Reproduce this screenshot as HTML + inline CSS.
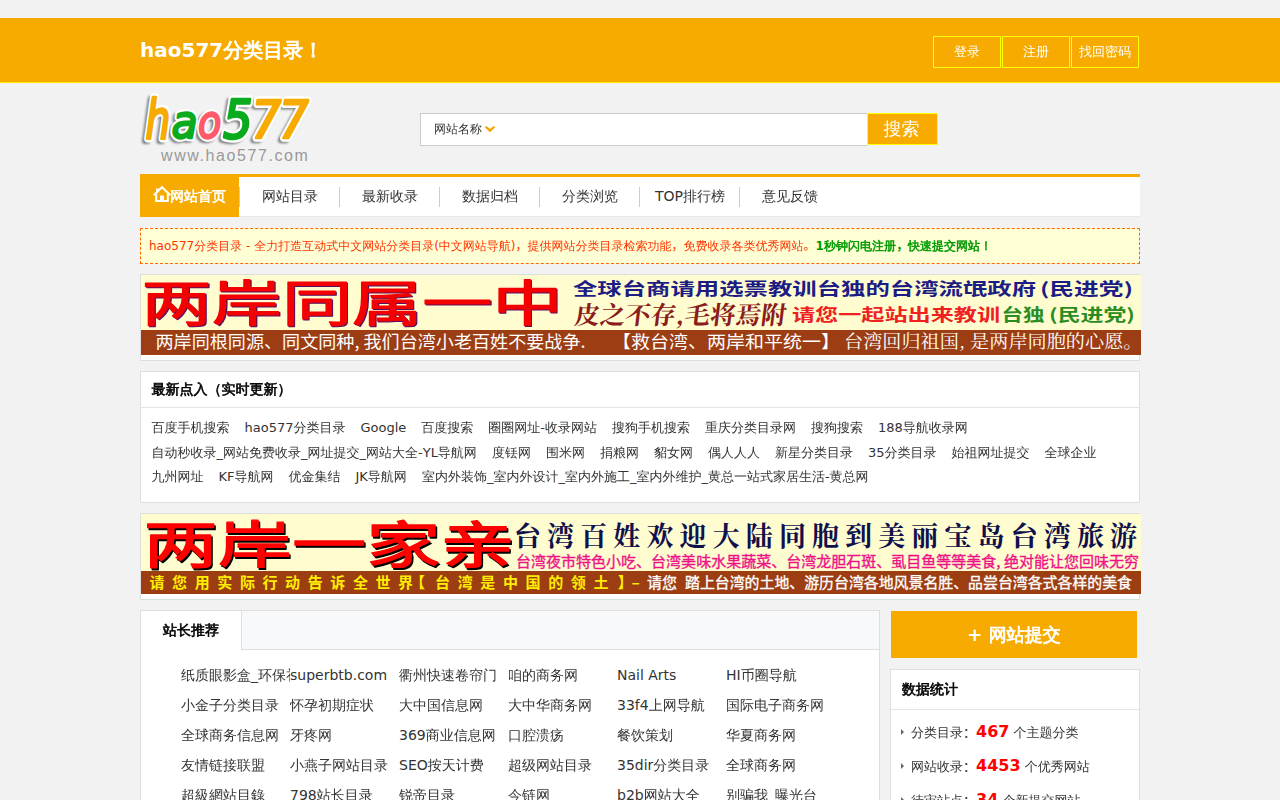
<!DOCTYPE html>
<html lang="zh-CN">
<head>
<meta charset="utf-8">
<title>hao577分类目录</title>
<style>
*{margin:0;padding:0;box-sizing:border-box}
html,body{width:1280px;height:800px;overflow:hidden}
body{background:#f2f2f2;font-family:"DejaVu Sans","WenQuanYi Zen Hei","Noto Sans CJK SC",sans-serif;font-size:12px;color:#333;position:relative}
a{color:#333;text-decoration:none}
.p{font-family:"Noto Sans CJK SC","WenQuanYi Zen Hei",sans-serif;line-height:0}
.fb{font-weight:normal;-webkit-text-stroke:0.0417em currentColor}
#top{position:absolute;left:0;top:18px;width:1280px;height:65px;background:#f7ab00;border-bottom:1px solid #ffea00}
#top h1{position:absolute;left:140px;top:18px;font-size:20px;line-height:28px;color:#fff;font-weight:bold;white-space:nowrap}
#top .btns{position:absolute;left:933px;top:18px;width:220px}
#top .btns a{float:left;width:68px;height:32px;border:1px solid #ffff00;color:#fff;font-size:13px;line-height:30px;text-align:center;margin-right:1px}
#logo{position:absolute;left:130px;top:85px;width:200px;height:85px}
#search{position:absolute;left:420px;top:113px;width:447px;height:33px;background:#fff;border:1px solid #ccc;border-right:0}
#search span{position:absolute;left:13px;top:0;line-height:31px;font-size:12px;color:#333}
#search svg{position:absolute;left:64px;top:12px}
#sbtn{position:absolute;left:867px;top:113px;width:71px;height:32px;background:#f7ab00;border:1px solid #ffff00;color:#fff;font-size:18px;line-height:30px;text-align:center;padding-right:2px}
#nav{position:absolute;left:140px;top:174px;width:1000px;height:43px;background:#fff;border-top:3px solid #f7ab00;border-bottom:1px solid #e8e8e8}
#nav a{float:left;width:100px;height:40px;line-height:39px;text-align:center;font-size:14px;color:#333;position:relative}
#nav a.cur{color:#fff;font-weight:bold}
#nav a.cur em{position:absolute;left:0;top:0;width:99px;height:40px;background:#f7ab00;font-style:normal;text-align:left;padding-left:30px}
#nav a.cur svg{position:absolute;left:13px;top:8px}
#nav a i{position:absolute;right:0;top:10px;height:20px;width:1px;background:#ccc}
#notice{position:absolute;left:140px;top:228px;width:1000px;height:36px;background:#ffffd5;border:1px dashed #ff6600;line-height:34px;padding-left:8px;color:#ff3300;font-size:12px;white-space:nowrap}
#notice b{color:#009900}
.ban{position:absolute;left:140px;width:1000px;height:87px;border:1px solid #dedede;background:#fff}
#ban1{top:274px}
#ban2{top:513px}
.box{position:absolute;background:#fff;border:1px solid #dedede}
#latest{left:140px;top:371px;width:1000px;height:132px}
#latest h3{height:36px;line-height:35px;padding-left:10.5px;font-size:14px;border-bottom:1px solid #e5e5e5;color:#000}
#latest p{padding:0 0 0 10.5px;line-height:24.5px;font-size:13px;white-space:nowrap}
#latest p.f{padding-top:8px}
#latest p a{margin-right:15px;display:inline-block}
#rec{left:140px;top:610px;width:740px;height:260px}
#rec .tabs{height:39px;background:#f8f9fb;border-bottom:1px solid #dedede}
#rec .tabs span{display:block;width:101px;height:39px;background:#fff;border-right:1px solid #dedede;font-size:14px;line-height:38px;padding-left:22px;color:#000}
#rec ul{list-style:none;padding:10px 0 0 40px}
#rec li{height:30px;white-space:nowrap}
#rec li a{display:inline-block;width:109px;height:30px;line-height:30px;font-size:14px;overflow:hidden;vertical-align:top;white-space:nowrap}
#submit{position:absolute;left:891px;top:611px;width:246px;height:47px;background:#f7ab00;color:#fff;font-size:18px;font-weight:bold;line-height:47px;text-align:center}
#stat{left:890px;top:669px;width:250px;height:200px}
#stat h3{height:40px;line-height:39px;padding-left:11px;font-size:14px;border-bottom:1px solid #e5e5e5;color:#000}
#stat ul{list-style:none;padding:5px 0 0 9px}
#stat li{height:34px;line-height:34px;font-size:13px;color:#333;white-space:nowrap;position:relative;padding-left:11px}
#stat li i{position:absolute;left:1px;top:14px;width:0;height:0;border:3px solid transparent;border-left:3px solid #666;border-right:0}
#stat li b{color:#f00;font-size:16px}
</style>
</head>
<body>
<div id="top">
  <h1>hao577<span class="fb">分类目录！</span></h1>
  <div class="btns"><a>登录</a><a>注册</a><a>找回密码</a></div>
</div>
<div id="logo"><svg width="200" height="85" viewBox="0 0 200 85">
<defs><filter id="ls" x="-10%" y="-10%" width="120%" height="130%"><feGaussianBlur stdDeviation="1.3"/></filter></defs>
<g font-family="'DejaVu Sans',sans-serif" font-style="oblique" font-size="57" stroke-linejoin="round" stroke-linecap="round">
<g fill="#666" stroke="#666" opacity="0.8" filter="url(#ls)" transform="translate(-2.5,2.5)" stroke-width="7"><text transform="translate(15.5,52.5) scale(0.69,0.935)">h</text><text transform="translate(41.5,52.5) scale(0.75,0.82)">a</text><text transform="translate(68,52.5) scale(0.67,0.82)">o</text><text transform="translate(93,52.5) scale(0.82,0.95)">5</text><text transform="translate(121.5,52.5) scale(0.82,0.915)">7</text><text transform="translate(149,52.5) scale(0.82,0.915)">7</text></g>
<g fill="#fff" stroke="#fff" stroke-width="8"><text transform="translate(15.5,52.5) scale(0.69,0.935)">h</text><text transform="translate(41.5,52.5) scale(0.75,0.82)">a</text><text transform="translate(68,52.5) scale(0.67,0.82)">o</text><text transform="translate(93,52.5) scale(0.82,0.95)">5</text><text transform="translate(121.5,52.5) scale(0.82,0.915)">7</text><text transform="translate(149,52.5) scale(0.82,0.915)">7</text></g>
<g  stroke-width="2.8"><text transform="translate(15.5,52.5) scale(0.69,0.935)" fill="#f7ab00" stroke="#f7ab00">h</text><text transform="translate(41.5,52.5) scale(0.75,0.82)" fill="#0aab1e" stroke="#0aab1e">a</text><text transform="translate(68,52.5) scale(0.67,0.82)" fill="#ff5a6a" stroke="#ff5a6a">o</text><text transform="translate(93,52.5) scale(0.82,0.95)" fill="#0aab1e" stroke="#0aab1e">5</text><text transform="translate(121.5,52.5) scale(0.82,0.915)" fill="#f7ab00" stroke="#f7ab00">7</text><text transform="translate(149,52.5) scale(0.82,0.915)" fill="#f7ab00" stroke="#f7ab00">7</text></g>
</g>
<text x="31" y="75.5" font-family="'Liberation Sans',sans-serif" font-size="16" letter-spacing="1.58" fill="#999">www.hao577.com</text>
</svg></div>
<div id="search"><span>网站名称</span><svg width="10" height="7" viewBox="0 0 10 7"><path d="M0 0.5 H2 L5 3 L8 0.5 H10 V1.5 L5 6.2 L0 1.5 Z" fill="#f7a400"/></svg></div>
<div id="sbtn">搜索</div>
<div id="nav">
  <a class="cur"><em><svg width="18" height="18" viewBox="0 0 18 18"><path d="M0.6 10.2 L9 2.2 L17.4 10.2 M3.2 9 V16 H14.8 V9" fill="none" stroke="#fff" stroke-width="2"/><rect x="3" y="3.4" width="2.6" height="4.2" fill="#fff"/><rect x="7" y="10.6" width="4" height="5.4" fill="#fff"/></svg><span class="fb">网站首页</span></em><i></i></a><a>网站目录<i></i></a><a>最新收录<i></i></a><a>数据归档<i></i></a><a>分类浏览<i></i></a><a>TOP排行榜<i></i></a><a>意见反馈</a>
</div>
<div id="notice">hao577分类目录 - 全力打造互动式中文网站分类目录(中文网站导航)<span class="p">，</span>提供网站分类目录检索功能<span class="p">，</span>免费收录各类优秀网站<span class="p">。</span><b>1<span class="fb">秒钟闪电注册</span><span class="p">，</span><span class="fb">快速提交网站！</span></b></div>
<div class="ban" id="ban1"><svg width="1000" height="80" viewBox="0 0 1000 80" style="display:block;overflow:visible">
<rect width="1000" height="55" fill="#fffdd0"/><rect y="55" width="1000" height="25" fill="#9c3d14"/>
<text x="0.6" y="45.7" font-family="'Noto Sans CJK SC','WenQuanYi Zen Hei',sans-serif" font-size="49" font-weight="normal" fill="#5a1060" textLength="421" lengthAdjust="spacingAndGlyphs" transform="translate(1.2,1.2)" stroke="#5a1060" stroke-width="1.2" stroke-linejoin="round">两岸同属一中</text>
<text x="0.6" y="45.7" font-family="'Noto Sans CJK SC','WenQuanYi Zen Hei',sans-serif" font-size="49" font-weight="normal" fill="#f40000" textLength="421" lengthAdjust="spacingAndGlyphs" stroke="#f40000" stroke-width="1.2" stroke-linejoin="round">两岸同属一中</text>
<text x="432" y="20.3" font-family="'Noto Sans CJK SC','WenQuanYi Zen Hei',sans-serif" font-size="17" font-weight="bold" fill="#1c1c84" textLength="463" lengthAdjust="spacingAndGlyphs">全球台商请用选票教训台独的台湾流氓政府</text>
<text x="899" y="20.3" font-family="'Noto Sans CJK SC','WenQuanYi Zen Hei',sans-serif" font-size="17" font-weight="bold" fill="#1c1c84" textLength="93" lengthAdjust="spacingAndGlyphs">(民进党)</text>
<text x="432.5" y="49" font-family="'Noto Serif CJK SC','Noto Sans CJK SC',serif" font-size="25" font-weight="bold" fill="#8a1c1c" textLength="212" lengthAdjust="spacingAndGlyphs" transform="skewX(-7)" style="transform-origin:432.5px 49px">皮之不存,毛将焉附</text>
<text x="651" y="45.5" font-family="'Noto Sans CJK SC','WenQuanYi Zen Hei',sans-serif" font-size="16.5" font-weight="bold" fill="#ee2020" textLength="208" lengthAdjust="spacingAndGlyphs">请您一起站出来教训</text>
<text x="860.5" y="45.5" font-family="'Noto Sans CJK SC','WenQuanYi Zen Hei',sans-serif" font-size="16.5" font-weight="bold" fill="#2a8c22" textLength="43" lengthAdjust="spacingAndGlyphs">台独</text>
<text x="908" y="45.5" font-family="'Noto Sans CJK SC','WenQuanYi Zen Hei',sans-serif" font-size="16.5" font-weight="bold" fill="#2a8c22" textLength="86" lengthAdjust="spacingAndGlyphs">(民进党)</text>
<text x="14.5" y="72.5" font-family="'Noto Sans CJK SC','WenQuanYi Zen Hei',sans-serif" font-size="17.5" font-weight="normal" fill="#fff" textLength="430" lengthAdjust="spacingAndGlyphs">两岸同根同源、同文同种, 我们台湾小老百姓不要战争.</text>
<text x="471" y="72.5" font-family="'Noto Sans CJK SC','WenQuanYi Zen Hei',sans-serif" font-size="17.5" font-weight="normal" fill="#fff" textLength="228" lengthAdjust="spacingAndGlyphs">【救台湾、两岸和平统一】</text>
<text x="703" y="72.8" font-family="'Noto Serif CJK SC','Noto Sans CJK SC',serif" font-size="18" font-weight="normal" fill="#fff" textLength="298.5" lengthAdjust="spacingAndGlyphs">台湾回归祖国, 是两岸同胞的心愿。</text>
</svg></div>
<div class="box" id="latest">
  <h3 class="fb">最新点入（实时更新）</h3>
  <p class="f"><a>百度手机搜索</a><a>hao577分类目录</a><a>Google</a><a>百度搜索</a><a>圈圈网址-收录网站</a><a>搜狗手机搜索</a><a>重庆分类目录网</a><a>搜狗搜索</a><a>188导航收录网</a></p>
  <p><a>自动秒收录_网站免费收录_网址提交_网站大全-YL导航网</a><a>度铥网</a><a>围米网</a><a>捐粮网</a><a>貂女网</a><a>偶人人人</a><a>新星分类目录</a><a>35分类目录</a><a>始祖网址提交</a><a>全球企业</a></p>
  <p><a>九州网址</a><a>KF导航网</a><a>优金集结</a><a>JK导航网</a><a>室内外装饰_室内外设计_室内外施工_室内外维护_黄总一站式家居生活-黄总网</a></p>
</div>
<div class="ban" id="ban2"><svg width="1000" height="80" viewBox="0 0 1000 80" style="display:block;overflow:visible">
<rect width="1000" height="57" fill="#fffdd0"/><rect y="57" width="1000" height="23" fill="#9c3d12"/>
<text x="2.6" y="49.3" font-family="'Noto Sans CJK SC','WenQuanYi Zen Hei',sans-serif" font-size="50.5" font-weight="normal" fill="#000" textLength="371" lengthAdjust="spacingAndGlyphs" transform="translate(1.5,1.8)" stroke="#000" stroke-width="1.3" stroke-linejoin="round">两岸一家亲</text>
<text x="2.6" y="49.3" font-family="'Noto Sans CJK SC','WenQuanYi Zen Hei',sans-serif" font-size="50.5" font-weight="normal" fill="#ff0000" textLength="371" lengthAdjust="spacingAndGlyphs" stroke="#ff0000" stroke-width="1.3" stroke-linejoin="round">两岸一家亲</text>
<text x="373" y="32" font-family="'Noto Serif CJK SC','Noto Sans CJK SC',serif" font-size="27" font-weight="bold" fill="#10104c" textLength="623" lengthAdjust="spacing">台湾百姓欢迎大陆同胞到美丽宝岛台湾旅游</text>
<text x="375" y="53" font-family="'Noto Sans CJK SC','WenQuanYi Zen Hei',sans-serif" font-size="15" font-weight="normal" fill="#ee1289" textLength="623" lengthAdjust="spacingAndGlyphs" stroke="#ee1289" stroke-width="0.35">台湾夜市特色小吃、台湾美味水果蔬菜、台湾龙胆石斑、虱目鱼等等美食, 绝对能让您回味无穷</text>
<text x="8.5" y="74" font-family="'Noto Sans CJK SC','WenQuanYi Zen Hei',sans-serif" font-size="15" font-weight="bold" fill="#ffee00" textLength="263.6" lengthAdjust="spacing">请您用实际行动告诉全世界</text>
<text x="269" y="74" font-family="'Noto Sans CJK SC','WenQuanYi Zen Hei',sans-serif" font-size="15" font-weight="bold" fill="#ffee00">【</text>
<text x="294" y="74" font-family="'Noto Sans CJK SC','WenQuanYi Zen Hei',sans-serif" font-size="15" font-weight="bold" fill="#ffee00" textLength="173.5" lengthAdjust="spacing">台湾是中国的领土</text>
<text x="476.7" y="74" font-family="'Noto Sans CJK SC','WenQuanYi Zen Hei',sans-serif" font-size="15" font-weight="bold" fill="#ffee00">】</text>
<text x="490.5" y="74" font-family="'Noto Sans CJK SC','WenQuanYi Zen Hei',sans-serif" font-size="15" font-weight="bold" fill="#ffee00">–</text>
<text x="506" y="74" font-family="'Noto Sans CJK SC','WenQuanYi Zen Hei',sans-serif" font-size="15" font-weight="normal" fill="#fff" textLength="30" lengthAdjust="spacingAndGlyphs" stroke="#fff" stroke-width="0.35">请您</text>
<text x="544" y="74" font-family="'Noto Sans CJK SC','WenQuanYi Zen Hei',sans-serif" font-size="15" font-weight="normal" fill="#fff" textLength="447" lengthAdjust="spacingAndGlyphs" stroke="#fff" stroke-width="0.35">踏上台湾的土地、游历台湾各地风景名胜、品尝台湾各式各样的美食</text>
</svg></div>
<div class="box" id="rec">
  <div class="tabs"><span class="fb">站长推荐</span></div>
  <ul>
    <li><a>纸质眼影盒_环保礼品包装</a><a>superbtb.com</a><a>衢州快速卷帘门</a><a>咱的商务网</a><a>Nail Arts</a><a>HI币圈导航</a></li>
    <li><a>小金子分类目录</a><a>怀孕初期症状</a><a>大中国信息网</a><a>大中华商务网</a><a>33f4上网导航</a><a>国际电子商务网</a></li>
    <li><a>全球商务信息网</a><a>牙疼网</a><a>369商业信息网</a><a>口腔溃疡</a><a>餐饮策划</a><a>华夏商务网</a></li>
    <li><a>友情链接联盟</a><a>小燕子网站目录</a><a>SEO按天计费</a><a>超级网站目录</a><a>35dir分类目录</a><a>全球商务网</a></li>
    <li><a>超級網站目錄</a><a>798站长目录</a><a>锐帝目录</a><a>今链网</a><a>b2b网站大全</a><a>别骗我_曝光台</a></li>
  </ul>
</div>
<div id="submit">+ <span class="fb">网站提交</span></div>
<div class="box" id="stat">
  <h3 class="fb">数据统计</h3>
  <ul>
    <li><i></i>分类目录<span class="p">：</span><b>467</b> 个主题分类</li>
    <li><i></i>网站收录<span class="p">：</span><b>4453</b> 个优秀网站</li>
    <li><i></i>待审站点<span class="p">：</span><b>34</b> 个新提交网站</li>
  </ul>
</div>

</body>
</html>
